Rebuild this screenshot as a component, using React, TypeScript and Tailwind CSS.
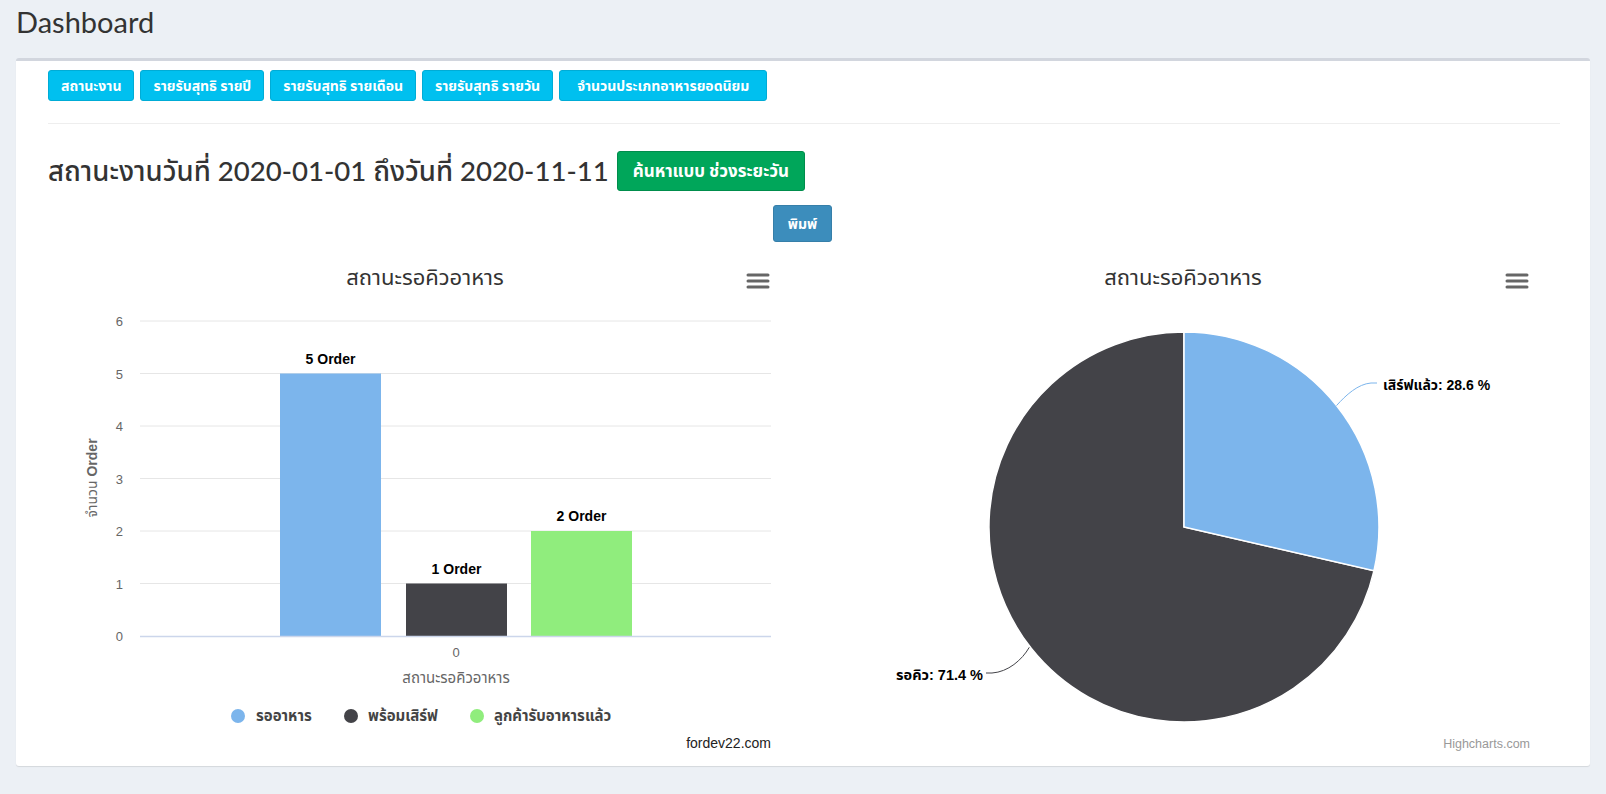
import React from 'react';

const tabs = ['สถานะงาน', 'รายรับสุทธิ รายปี', 'รายรับสุทธิ รายเดือน', 'รายรับสุทธิ รายวัน', 'จำนวนประเภทอาหารยอดนิยม'];

const chartFont = "'Liberation Sans', 'Noto Sans Thai', 'Noto Sans', sans-serif";

const MenuIcon = ({ x }: { x: number }) => (
  <g stroke="#666" strokeWidth={3} strokeLinecap="round">
    <line x1={x} y1={23} x2={x + 20} y2={23} />
    <line x1={x} y1={29} x2={x + 20} y2={29} />
    <line x1={x} y1={35} x2={x + 20} y2={35} />
  </g>
);

const BarChart = () => {
  const top = 69;
  const unit = 52.5;
  const bottom = top + unit * 6;
  const bars = [
    { x: 210, v: 5, color: '#7cb5ec' },
    { x: 336, v: 1, color: '#434348' },
    { x: 461, v: 2, color: '#90ed7d' },
  ];
  return (
    <svg width={711} height={505} style={{ fontFamily: chartFont }}>
      <text x={355} y={33} textAnchor="middle" fontSize={22} fill="#333">สถานะรอคิวอาหาร</text>
      <MenuIcon x={678} />
      {[6, 5, 4, 3, 2, 1].map((v) => (
        <g key={v}>
          <line x1={70} x2={701} y1={bottom - v * unit} y2={bottom - v * unit} stroke="#e6e6e6" />
          <text x={53} y={bottom - v * unit + 5} textAnchor="end" fontSize={13} fill="#666">{v}</text>
        </g>
      ))}
      <text x={53} y={bottom + 5} textAnchor="end" fontSize={13} fill="#666">0</text>
      {bars.map((b) => (
        <g key={b.x}>
          <rect x={b.x} y={bottom - b.v * unit} width={101} height={b.v * unit} fill={b.color} />
          <text x={b.x + 50.5} y={bottom - b.v * unit - 10} textAnchor="middle" fontSize={14} fontWeight="bold" fill="#000">
            {b.v} Order
          </text>
        </g>
      ))}
      <line x1={70} x2={701} y1={bottom + 0.5} y2={bottom + 0.5} stroke="#ccd6eb" strokeWidth={1.5} />
      <text x={23} y={226} transform="rotate(-90 23 226)" textAnchor="middle" dominantBaseline="middle" fontSize={14} fill="#666">
        จำนวน <tspan fontWeight="bold">Order</tspan>
      </text>
      <text x={386} y={405} textAnchor="middle" fontSize={13} fill="#666">0</text>
      <text x={386} y={431} textAnchor="middle" fontSize={15} fill="#666">สถานะรอคิวอาหาร</text>
      <g fontSize={15} fontWeight="bold" fill="#444">
        <circle cx={168} cy={464} r={7} fill="#7cb5ec" />
        <text x={186} y={469}>รออาหาร</text>
        <circle cx={281} cy={464} r={7} fill="#434348" />
        <text x={298} y={469}>พร้อมเสิร์ฟ</text>
        <circle cx={407} cy={464} r={7} fill="#90ed7d" />
        <text x={424} y={469}>ลูกค้ารับอาหารแล้ว</text>
      </g>
      <text x={701} y={496} textAnchor="end" fontSize={14} fill="#222">fordev22.com</text>
    </svg>
  );
};

const PieChart = () => {
  const cx = 358;
  const cy = 275;
  const r = 195;
  const end = (12.96 * Math.PI) / 180;
  const ex = (cx + r * Math.cos(end)).toFixed(1);
  const ey = (cy + r * Math.sin(end)).toFixed(1);
  return (
    <svg width={714} height={505} style={{ fontFamily: chartFont }}>
      <text x={357} y={33} textAnchor="middle" fontSize={22} fill="#333">สถานะรอคิวอาหาร</text>
      <MenuIcon x={681} />
      <path d={`M${cx},${cy} L${ex},${ey} A${r},${r} 0 1 1 ${cx},${cy - r} Z`} fill="#434348" stroke="#fff" strokeWidth={1.5} />
      <path d={`M${cx},${cy} L${cx},${cy - r} A${r},${r} 0 0 1 ${ex},${ey} Z`} fill="#7cb5ec" stroke="#fff" strokeWidth={1.5} />
      <path d="M510.5,153.6 C520,143 532,132 545,131 L551,131" fill="none" stroke="#7cb5ec" />
      <text x={557} y={138} fontSize={14} fontWeight="bold" fill="#000">เสิร์ฟแล้ว: 28.6 %</text>
      <path d="M203.3,395.3 C196,408 182,420 166,421 L160,421" fill="none" stroke="#434348" />
      <text x={157} y={428} textAnchor="end" fontSize={14.5} fontWeight="bold" fill="#000">รอคิว: 71.4 %</text>
      <text x={704} y={496} textAnchor="end" fontSize={12.5} fill="#999">Highcharts.com</text>
    </svg>
  );
};

export default function App() {
  return (
    <div className="w-full min-h-[794px] bg-[#ecf0f5] font-['Lato','Noto_Sans_Thai','Noto_Sans',sans-serif] text-[#333]">
      <h1 className="px-4 pt-px text-[29px] leading-[42px] font-normal text-[#333]">Dashboard</h1>

      <div className="mx-4 mt-[15px] bg-white border-t-[3px] border-[#d2d6de] rounded-[3px] shadow-[0_1px_1px_rgba(0,0,0,0.1)] pl-8 pr-[30px] pt-[9px] pb-[9px]">
        <div className="flex gap-[6px]">
          {tabs.map((t) => (
            <button
              key={t}
              className="h-[31px] px-3 last:px-[17px] rounded-[3px] bg-[#00c0ef] border border-[#00acd6] text-white text-[14px] font-bold whitespace-nowrap"
            >
              {t}
            </button>
          ))}
        </div>

        <div className="mt-[22px] border-t border-[#eee]" />

        <div className="mt-[27px] flex items-center">
          <h3 className="text-[27.6px] leading-[40px] text-[#333] font-medium whitespace-nowrap">
            สถานะงานวันที่ 2020-01-01 ถึงวันที่ 2020-11-11
          </h3>
          <button className="ml-2 h-10 px-[15px] rounded-[3px] bg-[#00a65a] border border-[#008d4c] text-white text-[17px] font-bold whitespace-nowrap">
            ค้นหาแบบ ช่วงระยะวัน
          </button>
        </div>

        <div className="mt-[14px] pl-[725px]">
          <button className="h-[37px] w-[59px] rounded-[3px] bg-[#3c8dbc] border border-[#367fa9] text-white text-[14px] font-bold">
            พิมพ์
          </button>
        </div>

        <div className="mt-[10px] grid grid-cols-2">
          <div className="px-[22px]">
            <BarChart />
          </div>
          <div className="px-[22px]">
            <PieChart />
          </div>
        </div>
      </div>
    </div>
  );
}
